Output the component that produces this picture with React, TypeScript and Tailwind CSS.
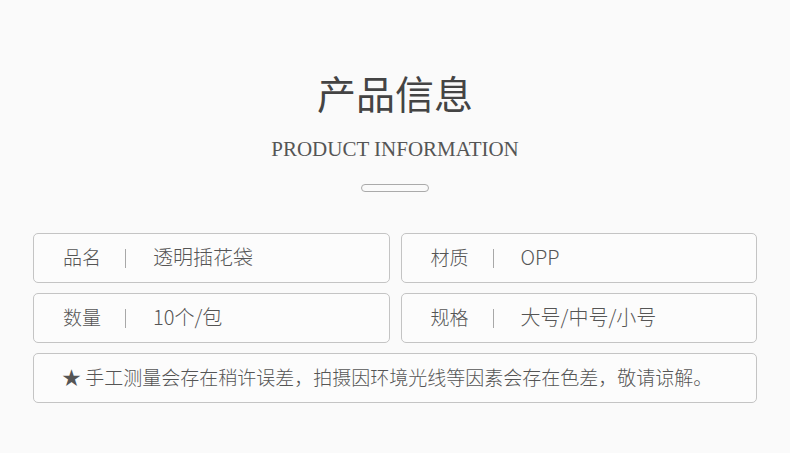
import React from "react";

const cjk = { fontFamily: '"Noto Sans CJK SC", "Noto Sans", sans-serif' };

function Cell({ label, value }: { label: string; value: string }) {
  return (
    <div className="h-[50px] flex items-center pl-[29px] pb-[3px] border border-[#c4c4c4] rounded-[5px] bg-[#fcfcfc]">
      <span className="w-[40px] text-[19px] font-light text-[#555] leading-none whitespace-nowrap">{label}</span>
      <span className="ml-[22px] mt-[3px] w-px h-[19px] bg-[#a8a8a8]" />
      <span className="ml-[27px] text-[20px] font-light text-[#555] leading-none whitespace-nowrap">{value}</span>
    </div>
  );
}

export default function App() {
  return (
    <div className="w-[790px] h-[453px] bg-[#fafafa] overflow-hidden" style={cjk}>
      <div className="pt-[72px] flex flex-col items-center">
        <div className="h-[40px] leading-[40px] text-[39px] text-[#444]">产品信息</div>
        <div
          className="mt-[26px] h-[22px] leading-[22px] text-[21px] text-[#555]"
          style={{ fontFamily: '"Liberation Serif", serif' }}
        >
          PRODUCT INFORMATION
        </div>
        <div className="mt-[24px] w-[68px] h-[8px] rounded-full border border-[#aaa]" />
      </div>
      <div className="mt-[41px] mx-[33px] grid grid-cols-2 gap-x-[11px] gap-y-[10px]">
        <Cell label="品名" value="透明插花袋" />
        <Cell label="材质" value="OPP" />
        <Cell label="数量" value="10个/包" />
        <Cell label="规格" value="大号/中号/小号" />
        <div className="col-span-2 h-[50px] flex items-center pl-[28px] pb-[3px] border border-[#c4c4c4] rounded-[5px] bg-[#fcfcfc]">
          <span className="text-[19px] font-light text-[#555] leading-none whitespace-nowrap">
            ★ 手工测量会存在稍许误差，拍摄因环境光线等因素会存在色差，敬请谅解。
          </span>
        </div>
      </div>
    </div>
  );
}
